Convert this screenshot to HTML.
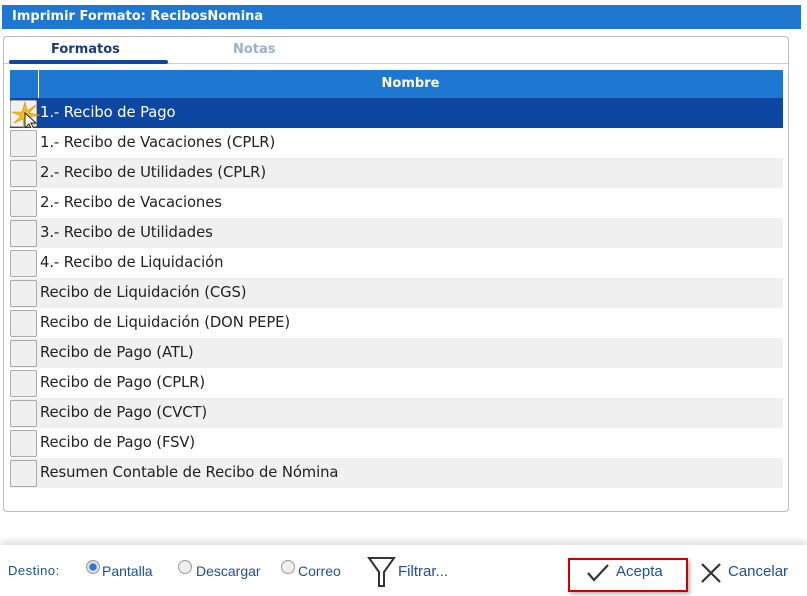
<!DOCTYPE html>
<html><head><meta charset="utf-8"><style>
*{margin:0;padding:0;box-sizing:border-box}
body{width:807px;height:596px;background:#fff;font-family:"DejaVu Sans",sans-serif;position:relative;overflow:hidden}
.title{position:absolute;left:2px;top:5px;width:799px;height:24px;background:#1e78d2;color:#fff;font-weight:bold;font-size:13px;line-height:24px;padding-left:10px}
.panel{position:absolute;left:3px;top:36px;width:786px;height:476px;border:1px solid #bbb;border-radius:4px}
.tabs{position:absolute;left:0;top:0;width:784px;height:27px;border-bottom:1px solid #ccc}
.tab{position:absolute;top:5px;font-size:13px;font-weight:bold}
.ul{position:absolute;left:5px;top:23px;width:159px;height:4px;background:#0d47a1;border-radius:2px}
.grid{position:absolute;left:6px;top:33px;width:773px}
.hdr{height:28px;background:#1e78d2;position:relative}
.hdr .sep{position:absolute;left:28px;top:0;width:1px;height:28px;background:#fff}
.hdr span{position:absolute;left:28px;right:0;text-align:center;color:#fff;font-weight:bold;font-size:13px;line-height:28px}
.row{height:30px;position:relative;font-size:14.8px;line-height:30px;color:#222;letter-spacing:-0.1px}
.row .cb{position:absolute;left:0;top:2px;width:27px;height:27px;border:1px solid #aaa;border-radius:2px;background:#f0f0f0}
.row span{position:absolute;left:30px}
.row.sel{background:#0d47a1;color:#fff}
.bottom{position:absolute;left:0;top:545px;width:807px;height:51px;background:#fff;box-shadow:0 -4px 6px rgba(0,0,0,.12);font-family:"Liberation Sans",sans-serif;color:#1a4fa0;font-size:14px}
.bottom .t{position:absolute;top:18px}
.rad{position:absolute;top:15px;width:14px;height:14px;border-radius:50%;border:1px solid #999;background:#eee}
</style></head><body>
<div class="title">Imprimir Formato: RecibosNomina</div>
<div class="panel">
 <div class="tabs">
  <div class="tab" style="left:47px;color:#1a3a80">Formatos</div>
  <div class="tab" style="left:229px;color:#9ab0cc">Notas</div>
  <div class="ul"></div>
 </div>
 <div class="grid">
  <div class="hdr"><div class="sep"></div><span>Nombre</span></div>
  <div>
  <div class="row sel"><div class="cb"></div><svg style="position:absolute;left:2px;top:3px" width="30" height="30"><path d="M13 1L15 10L24 4L17 12L28 14L17 16L23 24L14 18L12 28L11 18L2 22L9 15L0 11L10 11Z" fill="#f0c020" stroke="#d09000" stroke-width=".6"/><path d="M13 12V27L17 23L20 29L22 28L19 22L24 22Z" fill="#fff" stroke="#222"/></svg><span>1.- Recibo de Pago</span></div>
  <div class="row" style="background:#fff"><div class="cb"></div><span>1.- Recibo de Vacaciones (CPLR)</span></div>
  <div class="row" style="background:#f0f0f0"><div class="cb"></div><span>2.- Recibo de Utilidades (CPLR)</span></div>
  <div class="row" style="background:#fff"><div class="cb"></div><span>2.- Recibo de Vacaciones</span></div>
  <div class="row" style="background:#f0f0f0"><div class="cb"></div><span>3.- Recibo de Utilidades</span></div>
  <div class="row" style="background:#fff"><div class="cb"></div><span>4.- Recibo de Liquidación</span></div>
  <div class="row" style="background:#f0f0f0"><div class="cb"></div><span>Recibo de Liquidación (CGS)</span></div>
  <div class="row" style="background:#fff"><div class="cb"></div><span>Recibo de Liquidación (DON PEPE)</span></div>
  <div class="row" style="background:#f0f0f0"><div class="cb"></div><span>Recibo de Pago (ATL)</span></div>
  <div class="row" style="background:#fff"><div class="cb"></div><span>Recibo de Pago (CPLR)</span></div>
  <div class="row" style="background:#f0f0f0"><div class="cb"></div><span>Recibo de Pago (CVCT)</span></div>
  <div class="row" style="background:#fff"><div class="cb"></div><span>Recibo de Pago (FSV)</span></div>
  <div class="row" style="background:#f0f0f0"><div class="cb"></div><span>Resumen Contable de Recibo de Nómina</span></div>
  </div>
 </div>
</div>
<div class="bottom">
 <div class="t" style="left:8px;font-size:13px;letter-spacing:.5px">Destino:</div>
 <div class="rad" style="left:86px;background:radial-gradient(circle,#2a7ad0 40%,#ddd 45%)"></div>
 <div class="t" style="left:102px">Pantalla</div>
 <div class="rad" style="left:178px"></div>
 <div class="t" style="left:196px">Descargar</div>
 <div class="rad" style="left:281px"></div>
 <div class="t" style="left:298px">Correo</div>
 <svg style="position:absolute;left:367px;top:11px" width="30" height="32" viewBox="0 0 30 32"><path d="M2 2H27L17 16V30H12V16Z" fill="none" stroke="#333" stroke-width="2"/></svg>
 <div class="t" style="left:398px;font-size:15px">Filtrar...</div>
 <div style="position:absolute;left:568px;top:13px;width:120px;height:34px;border:2px solid #c00;box-shadow:2px 2px 4px rgba(0,0,0,.3)"></div>
 <svg style="position:absolute;left:586px;top:18px" width="24" height="20"><path d="M2 10L8 17L22 2" fill="none" stroke="#333" stroke-width="2.2"/></svg>
 <div class="t" style="left:616px;font-size:15px">Acepta</div>
 <svg style="position:absolute;left:700px;top:17px" width="22" height="22"><path d="M2 2L20 20M20 2L2 20" stroke="#333" stroke-width="2.2"/></svg>
 <div class="t" style="left:728px;font-size:15px">Cancelar</div>
</div>
</body></html>
